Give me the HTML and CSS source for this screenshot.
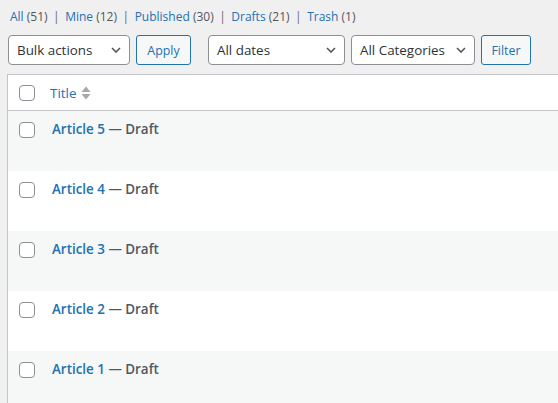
FILE: index.html
```html
<!DOCTYPE html>
<html lang="en">
<head>
<meta charset="utf-8">
<title>Posts</title>
<link rel="stylesheet" href="styles.css">
</head>
<body>
<div class="wrap">
  <ul class="views">
    <li><a href="#">All <span class="count">(51)</span></a><span class="sep">|</span></li>
    <li><a href="#">Mine <span class="count">(12)</span></a><span class="sep">|</span></li>
    <li><a href="#">Published <span class="count">(30)</span></a><span class="sep">|</span></li>
    <li><a href="#">Drafts <span class="count">(21)</span></a><span class="sep">|</span></li>
    <li><a href="#">Trash <span class="count">(1)</span></a></li>
  </ul>

  <div class="tablenav">
    <div class="actions">
      <div class="select select-bulk"><span>Bulk actions</span>
        <svg class="chev" width="10" height="6" viewBox="0 0 10 6"><path d="M1 1l4 4 4-4" fill="none" stroke="#50575e" stroke-width="1.6"/></svg>
      </div>
      <button class="button button-apply">Apply</button>
    </div>
    <div class="actions">
      <div class="select select-dates"><span>All dates</span>
        <svg class="chev" width="10" height="6" viewBox="0 0 10 6"><path d="M1 1l4 4 4-4" fill="none" stroke="#50575e" stroke-width="1.6"/></svg>
      </div>
      <div class="select select-cats"><span>All Categories</span>
        <svg class="chev" width="10" height="6" viewBox="0 0 10 6"><path d="M1 1l4 4 4-4" fill="none" stroke="#50575e" stroke-width="1.6"/></svg>
      </div>
      <button class="button button-filter">Filter</button>
    </div>
  </div>

  <table class="list">
    <thead>
      <tr>
        <th class="check-col"><input type="checkbox" class="cb"></th>
        <th class="title-col"><a href="#" class="sort-link">Title
          <svg class="sort" width="10" height="14" viewBox="0 0 10 14"><path d="M5 0.5L9.5 6H0.5z" fill="#a7aaad"/><path d="M5 13.5L9.5 8H0.5z" fill="#a7aaad"/></svg></a></th>
      </tr>
    </thead>
    <tbody>
      <tr class="alt"><td class="check-col"><input type="checkbox" class="cb"></td><td class="title-col"><strong><a href="#">Article 5</a> — <span class="state">Draft</span></strong></td></tr>
      <tr><td class="check-col"><input type="checkbox" class="cb"></td><td class="title-col"><strong><a href="#">Article 4</a> — <span class="state">Draft</span></strong></td></tr>
      <tr class="alt"><td class="check-col"><input type="checkbox" class="cb"></td><td class="title-col"><strong><a href="#">Article 3</a> — <span class="state">Draft</span></strong></td></tr>
      <tr><td class="check-col"><input type="checkbox" class="cb"></td><td class="title-col"><strong><a href="#">Article 2</a> — <span class="state">Draft</span></strong></td></tr>
      <tr class="alt"><td class="check-col"><input type="checkbox" class="cb"></td><td class="title-col"><strong><a href="#">Article 1</a> — <span class="state">Draft</span></strong></td></tr>
    </tbody>
  </table>
</div>
</body>
</html>
```

FILE: styles.css
```css
html, body {
  margin: 0;
  padding: 0;
  background: #f0f0f1;
  overflow: hidden;
}
body {
  font-family: "Open Sans", "Noto Sans", "Liberation Sans", sans-serif;
  color: #3c434a;
  font-size: 13px;
}
.wrap {
  padding: 4px 0 0 7px;
}
.views {
  list-style: none;
  margin: 0 0 0 3px;
  padding: 0;
  display: flex;
  line-height: 26px;
  font-size: 12px;
  color: #646970;
}
.views a {
  color: #2271b1;
  text-decoration: none;
}
.views .count {
  color: #50575e;
}
.views .sep {
  margin: 0 5.5px;
}
.tablenav {
  display: flex;
  margin: 5px 0 9px 1px;
  height: 30px;
  gap: 17px;
}
.actions {
  display: flex;
  gap: 6px;
}
.select {
  box-sizing: border-box;
  height: 30px;
  border: 1px solid #8c8f94;
  border-radius: 4px;
  background: #fff;
  color: #2c3338;
  font-size: 13.4px;
  display: flex;
  align-items: center;
  justify-content: space-between;
  padding: 0 8px 0 8px;
}
.select-bulk { width: 122px; }
.select-dates { width: 137px; }
.select-cats { width: 124px; }
.chev { flex: none; }
.button {
  box-sizing: border-box;
  height: 30px;
  border: 1px solid #2271b1;
  border-radius: 3px;
  background: #f6f7f7;
  color: #2271b1;
  font-family: inherit;
  font-size: 12.4px;
  padding: 0;
}
.button-apply { width: 55px; }
.button-filter { width: 50px; }
.list {
  border-spacing: 0;
  border: 1px solid #c3c4c7;
  border-right: 0;
  background: #fff;
  width: calc(100vw - 7px);
  table-layout: fixed;
}
.list th, .list td {
  padding: 0;
  text-align: left;
}
.list thead th {
  height: 35px;
  border-bottom: 1px solid #c3c4c7;
  vertical-align: middle;
  font-weight: 400;
}
.check-col { width: 34px; }
.list thead .check-col {
  padding-left: 11px;
  box-sizing: border-box;
}
.cb {
  -webkit-appearance: none;
  appearance: none;
  box-sizing: border-box;
  width: 16px;
  height: 16px;
  margin: 0;
  border: 1px solid #8c8f94;
  border-radius: 4px;
  background: #fff;
  display: block;
}
.sort-link {
  display: flex;
  align-items: center;
  padding: 0 8px;
  color: #2271b1;
  text-decoration: none;
  font-size: 13.4px;
}
.sort { margin-left: 5px; }
.list tbody tr { height: 60px; }
.list tbody tr.alt { background: #f6f7f7; }
.list tbody td { vertical-align: top; }
.list tbody .check-col {
  padding: 11px 0 0 11px;
}
.list tbody .title-col {
  padding: 8px 10px;
  font-size: 13.4px;
  line-height: 21px;
}
.list tbody .title-col strong {
  font-weight: 600;
  color: #50575e;
}
.list tbody .title-col a {
  color: #2271b1;
  text-decoration: none;
}
```
